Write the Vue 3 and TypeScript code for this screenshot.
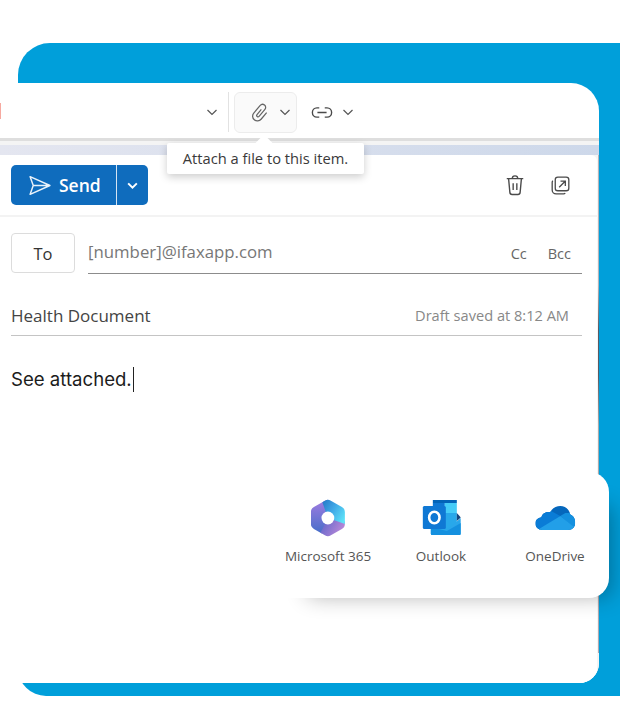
<script setup lang="ts">
interface AppItem {
  name: string
}

const apps: AppItem[] = [
  { name: 'Microsoft 365' },
  { name: 'Outlook' },
  { name: 'OneDrive' },
]
</script>

<template>
  <div class="page">
    <div class="panel">
      <div class="window">
        <div class="toolbar">
          <span class="red-edge"></span>
          <svg class="chev" viewBox="0 0 12 12"><path d="M1.5 4 L6 8.5 L10.5 4" /></svg>
          <span class="divider"></span>
          <div class="attach-btn">
            <svg class="clip" viewBox="0 0 24 24" fill="none">
              <path transform="rotate(40 12 12)" d="M17 8 V17 a5 5 0 0 1 -10 0 V6.5 a3.2 3.2 0 0 1 6.4 0 V16 a1.4 1.4 0 0 1 -2.8 0 V9" />
            </svg>
            <svg class="chev" viewBox="0 0 12 12"><path d="M1.5 4 L6 8.5 L10.5 4" /></svg>
          </div>
          <svg class="link" viewBox="0 0 24 14" fill="none">
            <path d="M9 2 H6.5 C3.5 2 1.5 4.2 1.5 7 C1.5 9.8 3.5 12 6.5 12 H9 M15 2 H17.5 C20.5 2 22.5 4.2 22.5 7 C22.5 9.8 20.5 12 17.5 12 H15 M7 7 H17" />
          </svg>
          <svg class="chev" viewBox="0 0 12 12"><path d="M1.5 4 L6 8.5 L10.5 4" /></svg>

          <div class="tooltip">Attach a file to this item.</div>
        </div>

        <div class="strip">
          <div class="compose">
            <div class="actions">
              <div class="send">
                <div class="send-main">
                  <svg class="plane" viewBox="0 0 24 24" fill="none">
                    <path d="M3 3.5 L22 12 L3 20.5 L6 12 Z M6 12 H22" />
                  </svg>
                  <span>Send</span>
                </div>
                <div class="send-drop">
                  <svg viewBox="0 0 12 12"><path d="M2 4 L6 8 L10 4" /></svg>
                </div>
              </div>
              <div class="action-icons">
                <svg class="icon" viewBox="0 0 24 24" fill="none">
                  <path d="M3 5 H21 M9 5 C9 3 10 2 12 2 C14 2 15 3 15 5 M5 5 L6.4 20 C6.5 21.4 7.5 22.3 8.8 22.3 H15.2 C16.5 22.3 17.5 21.4 17.6 20 L19 5 M10 10 V17.5 M14 10 V17.5" />
                </svg>
                <svg class="icon popout" viewBox="0 0 24 24" fill="none">
                  <rect x="6" y="2.5" width="15.5" height="15.5" rx="3" />
                  <path d="M3.2 6.5 C2.7 7 2.5 7.8 2.5 8.5 V17 C2.5 19.5 4.5 21.5 7 21.5 H15.5 C16.4 21.5 17 21.2 17.5 20.8 M10.5 14 L17 7.5 M12 7 H17.5 V12.5" />
                </svg>
              </div>
            </div>

            <div class="to-row">
              <button class="to-btn">To</button>
              <div class="to-field">
                <span class="address">[number]@ifaxapp.com</span>
                <span class="cc">Cc</span>
                <span class="bcc">Bcc</span>
              </div>
            </div>

            <div class="subject">
              <span>Health Document</span>
              <span class="draft">Draft saved at 8:12 AM</span>
            </div>

            <div class="body-text">See attached.<span class="caret"></span></div>
          </div>
        </div>
      </div>

      <div class="apps">
        <div v-for="app in apps" :key="app.name" class="app">
          <svg v-if="app.name === 'Microsoft 365'" class="app-icon" viewBox="0 0 40 40">
            <defs>
              <linearGradient id="m1" x1="0" y1="0" x2="1" y2="0.6">
                <stop offset="0" stop-color="#1f6fc0" />
                <stop offset="0.5" stop-color="#3fa6e6" />
                <stop offset="1" stop-color="#5fe4f8" />
              </linearGradient>
              <linearGradient id="m2" x1="0" y1="0" x2="0" y2="1">
                <stop offset="0" stop-color="#a67de2" />
                <stop offset="1" stop-color="#3a6cc6" />
              </linearGradient>
              <linearGradient id="m3" x1="0" y1="0.3" x2="1" y2="0.7">
                <stop offset="0" stop-color="#5a63c8" />
                <stop offset="1" stop-color="#cc90dc" />
              </linearGradient>
              <clipPath id="hex">
                <path d="M17 2.7 Q20 1 23 2.7 L34 9 Q37 10.7 37 14 V26 Q37 29.3 34 31 L23 37.3 Q20 39 17 37.3 L6 31 Q3 29.3 3 26 V14 Q3 10.7 6 9 Z" />
              </clipPath>
            </defs>
            <g clip-path="url(#hex)">
              <polygon fill="url(#m2)" points="20,20 20,0 0,0 0,40 12,40" />
              <polygon fill="url(#m3)" points="20,20 40,24 40,40 10,40" />
              <polygon fill="url(#m1)" points="20,20 13,0 40,0 40,27" />
            </g>
            <circle cx="20" cy="20" r="6.4" fill="#fff" />
          </svg>

          <svg v-else-if="app.name === 'Outlook'" class="app-icon" viewBox="0 0 40 40">
            <rect x="12" y="2" width="24" height="3" fill="#0364b8" />
            <rect x="12" y="5" width="12" height="27" fill="#0f78d4" />
            <rect x="24" y="5" width="12" height="10" fill="#45ccf8" />
            <rect x="24" y="15" width="12" height="17" fill="#28a8ea" />
            <path fill="#14447d" d="M36 15 L40 19.5 L36 23 Z" />
            <path fill="#2aa6ea" d="M10 23 L26 32 L40 20 V35.5 C40 36.5 39.2 37 38.5 37 H11.5 C10.6 37 10 36.5 10 35.5 Z" />
            <path fill="#1490df" d="M10 29 L26 33 L40 25 V35.5 C40 36.5 39.2 37 38.5 37 H11.5 C10.6 37 10 36.5 10 35.5 Z" />
            <rect x="2" y="8" width="23" height="23" rx="1.5" fill="#0f78d4" />
            <ellipse cx="13.5" cy="19.5" rx="5.2" ry="5.8" fill="none" stroke="#fff" stroke-width="2.6" />
          </svg>

          <svg v-else class="app-icon wide" viewBox="0 0 40 26">
            <defs>
              <clipPath id="cloud">
                <path d="M7 25 C3 25 0 22 0 18.5 C0 15 3 12.5 6 12.5 C7 8 11 6.5 15 7 C17 3 21 1 25 1 C30 1 34 4.5 35 9.5 C38 10.5 40 14 40 17.5 C40 22 37 25 33 25 Z" />
              </clipPath>
            </defs>
            <g clip-path="url(#cloud)">
              <rect width="40" height="26" fill="#0567bc" />
              <polygon fill="#0a7cd6" points="0,5 14,5 25,11 2,26 0,26" />
              <polygon fill="#1490df" points="25,11 30,8 40,8 40,24" />
              <polygon fill="#229fe8" points="2,25 25,11 40,23 40,26 0,26" />
            </g>
          </svg>

          <span class="app-name">{{ app.name }}</span>
        </div>
      </div>
    </div>
  </div>
</template>

<style scoped>
.page {
  width: 620px;
  height: 710px;
  padding-top: 43px;
  box-sizing: border-box;
  overflow: hidden;
  background: #fff;
  font-family: "Open Sans", "Noto Sans", sans-serif;
}

.panel {
  position: relative;
  margin-left: 18px;
  height: 653px;
  padding-top: 40px;
  box-sizing: border-box;
  background: #009fda;
  border-radius: 32px 0 0 28px;
}

.window {
  margin-left: -18px;
  width: 599px;
  height: 600px;
  background: #fff;
  border-radius: 0 28px 20px 0;
  display: flex;
  flex-direction: column;
  overflow: hidden;
}

.toolbar {
  position: relative;
  height: 58px;
  flex: none;
  display: flex;
  align-items: center;
  padding: 3px 0 0 206px;
  box-sizing: border-box;
  border-bottom: 3px solid #dedede;
}

.red-edge {
  position: absolute;
  left: 0;
  top: 20px;
  width: 1px;
  height: 16px;
  background: #f6a9a0;
}

.chev {
  width: 12px;
  height: 12px;
  flex: none;
  fill: none;
  stroke: #555;
  stroke-width: 1.2;
}

.divider {
  width: 1px;
  height: 40px;
  margin: 0 5px 0 10px;
  background: #e2e2e2;
}

.attach-btn {
  width: 63px;
  height: 41px;
  display: flex;
  align-items: center;
  gap: 7px;
  padding-left: 14px;
  box-sizing: border-box;
  border: 1px solid #ececec;
  border-radius: 6px;
  background: #fafafa;
  margin-right: 14px;
}

.clip {
  width: 23px;
  height: 23px;
  stroke: #666;
  stroke-width: 1.3;
}

.link {
  width: 22px;
  height: 13px;
  margin-right: 9px;
  stroke: #4a4a4a;
  stroke-width: 1.5;
}

.tooltip {
  position: absolute;
  left: 167px;
  top: 60px;
  z-index: 3;
  width: 197px;
  height: 31px;
  box-sizing: border-box;
  background: #fff;
  border-radius: 2px;
  box-shadow: 0 3px 9px rgba(0, 0, 0, 0.2);
  font-size: 14.7px;
  line-height: 31px;
  text-align: center;
  color: #3a3a3a;
}

.tooltip::before {
  content: "";
  position: absolute;
  left: 91px;
  top: -6px;
  width: 12px;
  height: 12px;
  background: #fff;
  transform: rotate(45deg);
}

.strip {
  position: relative;
  flex: 1;
  min-height: 0;
  padding-top: 14px;
  background: linear-gradient(90deg, #e4e6f0, #cdd8ea) 0 4px / 100% 10px no-repeat, #f4f4f4;
}

/* thin dark edge of the window behind the card */
.strip::after {
  content: "";
  position: absolute;
  right: 0;
  top: 14px;
  bottom: 30px;
  width: 1.5px;
  background: linear-gradient(#b4b4ba 0, #b4b4ba 130px, #5a5a62 175px, #5a5a62 220px, #aaa 270px, #b0a8b0 100%);
}

.compose {
  height: 100%;
  margin-right: 2px;
  background: #fff;
  border-radius: 0 6px 0 0;
}

.actions {
  height: 62px;
  display: flex;
  align-items: center;
  justify-content: space-between;
  padding: 0 26px 0 11px;
  box-sizing: border-box;
  border-bottom: 2px solid #f3f3f3;
}

.send {
  display: flex;
  height: 40px;
  border-radius: 5px;
  overflow: hidden;
  background: #0f6cbd;
  color: #fff;
}

.send-main {
  width: 106px;
  display: flex;
  align-items: center;
  gap: 7px;
  padding-left: 16px;
  box-sizing: border-box;
  font-size: 17.5px;
  font-weight: 600;
  border-right: 1px solid #d5e4f3;
}

.plane {
  width: 25px;
  height: 25px;
  stroke: #e9f2fa;
  stroke-width: 1.4;
  stroke-linejoin: round;
}

.send-drop {
  width: 31px;
  display: flex;
  align-items: center;
  justify-content: center;
}

.send-drop svg {
  width: 13px;
  height: 13px;
  fill: none;
  stroke: #fff;
  stroke-width: 1.8;
}

.action-icons {
  display: flex;
  align-items: center;
  gap: 24px;
}

.icon {
  width: 22px;
  height: 22px;
  stroke: #4a4a4a;
  stroke-width: 1.5;
}

.popout {
  width: 21px;
  height: 21px;
}

.to-row {
  display: flex;
  padding: 16px 15px 0 11px;
  gap: 13px;
}

.to-btn {
  width: 64px;
  height: 40px;
  padding: 0;
  border: 1px solid #dcdcdc;
  border-radius: 4px;
  background: #fff;
  font: 500 16.5px "Open Sans", sans-serif;
  color: #333;
}

.to-field {
  flex: 1;
  display: flex;
  align-items: center;
  height: 40px;
  border-bottom: 1px solid #8c8c8c;
}

.address {
  flex: 1;
  padding-bottom: 3px;
  font-size: 16.8px;
  color: #777;
}

.cc,
.bcc {
  font-size: 14.5px;
  color: #666;
}

.bcc {
  margin: 0 11px 0 21px;
}

.subject {
  display: flex;
  align-items: center;
  justify-content: space-between;
  margin: 21px 15px 0 11px;
  height: 41px;
  padding-right: 13px;
  box-sizing: border-box;
  border-bottom: 1px solid #c4c4c4;
  font-size: 17px;
  color: #444;
}

.draft {
  font-size: 14.6px;
  color: #888;
}

.body-text {
  display: flex;
  align-items: center;
  margin: 29px 0 0 11px;
  font-family: Inter, "Liberation Sans", sans-serif;
  font-size: 18.6px;
  line-height: 28px;
  color: #1c1c1c;
}

.caret {
  width: 1px;
  height: 25px;
  margin-left: 1px;
  background: #222;
}

.apps {
  position: absolute;
  left: 252px;
  top: 429px;
  z-index: 2;
  width: 339px;
  height: 126px;
  background: #fff;
  border-radius: 0 20px 20px 0;
  box-shadow: 20px 16px 22px -18px rgba(0, 0, 0, 0.32);
}

.app {
  position: absolute;
  top: 26px;
  display: flex;
  flex-direction: column;
  align-items: center;
  transform: translateX(-50%);
  white-space: nowrap;
}

.app:nth-child(1) { left: 58px; }
.app:nth-child(2) { left: 171px; }
.app:nth-child(3) { left: 285px; }

.app-icon {
  width: 40px;
  height: 40px;
}

.app-icon.wide {
  height: 26px;
  margin: 7px 0;
}

.app-name {
  margin-top: 9px;
  font-size: 13.5px;
  color: #555;
}
</style>
